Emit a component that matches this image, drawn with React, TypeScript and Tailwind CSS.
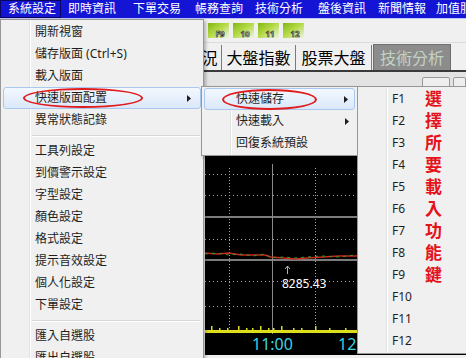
import clsx from "clsx";

const MENU_BAR = [
  { label: "系統設定", w: "w-[61px]", open: true },
  { label: "即時資訊", w: "w-[65px]" },
  { label: "下單交易", w: "w-[62px]" },
  { label: "帳務查詢", w: "w-[60px]" },
  { label: "技術分析", w: "w-[63px]" },
  { label: "盤後資訊", w: "w-[60px]" },
  { label: "新聞情報", w: "w-[58px]" },
  { label: "加值服務", w: "w-[61px]" },
];

type Item = { label: string; sub?: boolean; active?: boolean } | "sep";

const SYSTEM_MENU: Item[] = [
  { label: "開新視窗" },
  { label: "儲存版面 (Ctrl+S)" },
  { label: "載入版面" },
  { label: "快速版面配置", sub: true, active: true },
  { label: "異常狀態記錄" },
  "sep",
  { label: "工具列設定" },
  { label: "到價警示設定" },
  { label: "字型設定" },
  { label: "顏色設定" },
  { label: "格式設定" },
  { label: "提示音效設定" },
  { label: "個人化設定" },
  { label: "下單設定" },
  "sep",
  { label: "匯入自選股" },
  { label: "匯出自選股" },
];

const LAYOUT_MENU: Item[] = [
  { label: "快速儲存", sub: true, active: true },
  { label: "快速載入", sub: true },
  { label: "回復系統預設" },
];

const F_KEYS = Array.from({ length: 12 }, (_, i) => `F${i + 1}`);
// F1–F8 sit under the open menu, only the last four show
const TOOL_KEYS = ["F9", "10", "11", "12"];
const HINT = "選擇所要載入功能鍵".split("");

function SubArrow() {
  return (
    <svg width="4" height="7" viewBox="0 0 4 7" className="ml-auto">
      <path d="M0 0 L4 3.5 L0 7 Z" fill="#1e1e1e" />
    </svg>
  );
}

function Menu({ items, className, arrowGap }: { items: Item[]; className: string; arrowGap: string }) {
  return (
    <div className={clsx("absolute border border-[#979797] bg-[#f0f0f0] py-px shadow-[2px_2px_3px_rgba(0,0,0,0.25)]", className)}>
      {/* gutter */}
      <div className="absolute inset-y-0 left-[28px] w-[2px] border-l border-[#e2e3e3] border-r-white border-r" />
      {items.map((it, i) =>
        it === "sep" ? (
          <div key={i} className="relative h-[9px] ml-[31px] mr-[3px] flex flex-col justify-center">
            <div className="h-px bg-[#d7d7d7]" />
            <div className="h-px bg-white" />
          </div>
        ) : (
          <div
            key={i}
            className={clsx(
              "relative mx-[2px] h-[22px] flex items-center text-[12px] text-[#1e1e1e]",
              arrowGap,
              it.active
                ? "pl-[31px] rounded-[3px] border border-[#a8c8ef] bg-linear-to-b from-[#f3f8fe] to-[#dbe8f9]"
                : "pl-[32px]"
            )}
          >
            <span className="leading-none">{it.label}</span>
            {it.sub && <SubArrow />}
          </div>
        )
      )}
    </div>
  );
}

function Chart() {
  const dotted = [20, 41, 85, 127, 152];
  return (
    <svg width="261" height="201" className="bg-black block">
      {dotted.map((y) => (
        <line key={y} x1="0" x2="261" y1={y + 0.5} y2={y + 0.5} stroke="#a8a8a8" strokeDasharray="1 3" />
      ))}
      {[24, 110, 196].map((x) => (
        <line key={x} x1={x + 0.5} x2={x + 0.5} y1="14" y2="176" stroke="#a8a8a8" strokeDasharray="1 2" />
      ))}
      <line x1="0" x2="261" y1="63" y2="63" stroke="#7c7c7c" strokeWidth="2" />
      <line x1="0" x2="261" y1="106" y2="106" stroke="#7c7c7c" strokeWidth="2" />
      <line x1="67.5" x2="67.5" y1="10" y2="180" stroke="#8a8a8a" />
      <polyline
        fill="none"
        stroke="#c8281e"
        strokeWidth="1.5"
        points="0,99 12,100 24,99 36,101 48,101 60,101 66,103 78,104 90,105 102,104 118,103 134,102 150,102 175,101 261,101"
      />
      <polyline
        fill="none"
        stroke="#3a9a2a"
        strokeWidth="1"
        strokeDasharray="3 4"
        points="0,100 12,99 24,101 36,100 48,102 60,100 66,104 78,103 90,104 102,103 118,102 134,103 150,101 175,102 261,102"
      />
      <path d="M82.5 112 L82.5 120 M80 115 L82.5 112 L85 115" stroke="#a9b8a9" fill="none" />
      <text x="77" y="134" fill="#ffffff" fontSize="12" fontFamily="Noto Sans, sans-serif">
        8285.43
      </text>
      <rect x="0" y="176" width="261" height="3" fill="#dede1a" />
      {[6, 14, 22, 33, 41, 47, 55, 63, 68, 76, 88, 96, 110, 124, 140, 160, 180].map((x, i) => (
        <rect key={x} x={x} y={i % 3 === 0 ? 172 : 174} width="1.5" height={i % 3 === 0 ? 4 : 2} fill="#dede1a" />
      ))}
      <text x="47" y="196" fill="#38d3e3" fontSize="16" fontFamily="Noto Sans, sans-serif">
        11:00
      </text>
      <text x="133" y="196" fill="#38d3e3" fontSize="16" fontFamily="Noto Sans, sans-serif">
        12
      </text>
    </svg>
  );
}

export default function App() {
  return (
    <div className="relative w-[466px] h-[358px] overflow-hidden bg-[#f0f0f0] font-['Noto_Sans','Noto_Sans_CJK_TC',sans-serif]">
      {/* menu bar */}
      <div className="h-[18px] bg-[#1414d4] flex">
        {MENU_BAR.map((m) => (
          <div
            key={m.label}
            className={clsx(
              "shrink-0 h-full flex items-center pl-[7px] text-[12px] text-white leading-none",
              m.w,
              m.open && "border border-[#06065e] pl-[6px]"
            )}
          >
            {m.label}
          </div>
        ))}
      </div>
      <div className="h-px bg-[#c4c4f2]" />

      {/* toolbar with function keys */}
      <div className="h-[24px] flex gap-[4px] pl-[208px] pt-[4px] border-b border-[#dcdcdc]">
        {TOOL_KEYS.map((k) => (
          <div
            key={k}
            className="w-[21px] h-[15px] bg-linear-to-br from-[#7fb800] via-[#b9dc4a] to-[#eef3e2] flex items-end justify-center pl-[3px] text-[8px] font-bold leading-[9px] text-[#f4f4d8] [-webkit-text-stroke:0.6px_#222]"
          >
            {k}
          </div>
        ))}
      </div>

      {/* tabs */}
      <div className="h-[29px] flex items-end border-b-2 border-[#3a3a3a]">
        <div className="ml-[150px] w-[72px] h-[25px] flex items-center justify-center border-r border-[#7a7a7a] text-[16px] text-black leading-none">
          大盤概況
        </div>
        <div className="w-[74px] h-[25px] flex items-center justify-center border-r border-[#7a7a7a] text-[16px] text-black leading-none">
          大盤指數
        </div>
        <div className="w-[76px] h-[25px] flex items-center justify-center border-r border-[#7a7a7a] text-[16px] text-black leading-none">
          股票大盤
        </div>
        <div className="ml-px w-[78px] h-[26px] flex items-center justify-center bg-[#8c8c8c] border-t border-x border-[#6e6e6e] text-[16px] text-[#c3d3c3] leading-none">
          技術分析
        </div>
      </div>

      {/* strip above the chart */}
      <div className="h-[82px] bg-[#e3e3e3] flex gap-[3px] pl-[422px] pt-[5px]">
        <div className="w-[30px] h-[14px] rounded-t-[2px] border border-[#9a9a9a] bg-[#eeeeee]" />
        <div className="w-[14px] h-[14px] rounded-t-[2px] border border-[#9a9a9a] bg-[#eeeeee]" />
      </div>

      {/* chart */}
      <div className="flex">
        <div className="w-[205px] h-[201px] bg-[#f0f0f0]" />
        <Chart />
      </div>

      {/* open menus */}
      <Menu items={SYSTEM_MENU} className="left-0 top-[19px] w-[204px] h-[345px]" arrowGap="pr-[9px]" />
      <Menu items={LAYOUT_MENU} className="left-[201px] top-[86px] w-[157px]" arrowGap="pr-[6px]" />

      <div className="absolute left-[357px] top-[86px] w-[112px] border border-[#979797] bg-[#f0f0f0] py-px">
        <div className="absolute inset-y-0 left-[28px] w-[2px] border-l border-[#e2e3e3] border-r-white border-r" />
        {F_KEYS.map((f) => (
          <div key={f} className="relative h-[22px] mx-[2px] pl-[32px] flex items-center text-[12px] text-[#1e1e1e] leading-none">
            {f}
          </div>
        ))}
      </div>

      {/* annotations */}
      <div className="absolute left-[425px] top-[88px] flex flex-col">
        {HINT.map((c, i) => (
          <span key={i} className="h-[22px] leading-[22px] text-[17px] font-bold text-[#e5121a]">
            {c}
          </span>
        ))}
      </div>
      <div className="absolute left-[23px] top-[88px] w-[120px] h-[20px] rounded-[50%] border-2 border-[#e01c1c]" />
      <div className="absolute left-[222px] top-[89px] w-[95px] h-[21px] rounded-[50%] border-2 border-[#e01c1c]" />
    </div>
  );
}
